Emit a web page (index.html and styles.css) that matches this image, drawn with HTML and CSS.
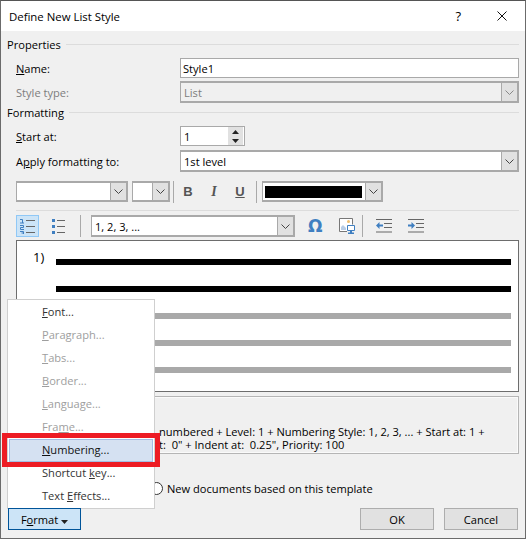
FILE: index.html
```html
<!DOCTYPE html>
<html lang="en">

<head>
    <meta charset="UTF-8" />
    <title>Define New List Style</title>
    <link rel="stylesheet" href="styles.css">
</head>

<body>
    <div class="dialog">
        <div class="titlebar">
            <span class="title">Define New List Style</span>
            <span class="help">?</span>
            <svg class="close" width="10" height="10" viewBox="0 0 10 10"><path d="M.5.5l9 9M9.500.5l-9 9" stroke="#111" fill="none" /></svg>
        </div>

        <div class="content">
            <div class="section"><span>Properties</span><i></i></div>
            <div class="row row-name">
                <label><u>N</u>ame:</label>
                <div class="field">Style1</div>
            </div>
            <div class="row row-type">
                <label class="disabled">Style type:</label>
                <div class="field combo disabled-field">
                    <span>List</span>
                    <b class="drop"><svg width="9" height="5" viewBox="0 0 9 5"><path d="M.5.5l4 4 4-4" fill="none" stroke="#888" /></svg></b>
                </div>
            </div>

            <div class="section section-format"><span>Formatting</span><i></i></div>
            <div class="row row-start">
                <label><u>S</u>tart at:</label>
                <div class="field spin">
                    <span>1</span>
                    <b class="spin-btns">
                        <svg width="7" height="4" viewBox="0 0 7 4"><path d="M3.500 0l3.500 4H0z" fill="#222" /></svg>
                        <svg width="7" height="4" viewBox="0 0 7 4"><path d="M3.500 4L7 0H0z" fill="#222" /></svg>
                    </b>
                </div>
            </div>
            <div class="row row-apply">
                <label>A<u>p</u>ply formatting to:</label>
                <div class="field combo">
                    <span>1st level</span>
                    <b class="drop"><svg width="9" height="5" viewBox="0 0 9 5"><path d="M.5.5l4 4 4-4" fill="none" stroke="#444" /></svg></b>
                </div>
            </div>

            <div class="font-bar">
                <div class="field combo font-name"><b class="drop"><svg width="9" height="5" viewBox="0 0 9 5"><path d="M.5.5l4 4 4-4" fill="none" stroke="#444" /></svg></b></div>
                <div class="field combo font-size"><b class="drop"><svg width="9" height="5" viewBox="0 0 9 5"><path d="M.5.5l4 4 4-4" fill="none" stroke="#444" /></svg></b></div>
                <i class="vsep"></i>
                <span class="fmt fmt-b">B</span>
                <span class="fmt fmt-i">I</span>
                <span class="fmt fmt-u">U</span>
                <i class="vsep"></i>
                <div class="field combo font-color">
                    <em class="swatch"></em>
                    <b class="drop"><svg width="9" height="5" viewBox="0 0 9 5"><path d="M.5.5l4 4 4-4" fill="none" stroke="#444" /></svg></b>
                </div>
            </div>

            <div class="hline"></div>

            <div class="list-bar">
                <span class="tool tool-on">
                    <svg width="15" height="15" viewBox="0 0 15 15">
                        <path d="M0 .5h2.500V4M0 4h4M0 6.500h3.500V8.500H.5v2h3.500M0 12.500h3.500v3H0M1.500 14h2" fill="none" stroke="#3f7fc1" />
                        <path d="M6 1.500h9M6 7.500h9M6 13.500h9" stroke="#666" stroke-width="1.200" />
                    </svg>
                </span>
                <span class="tool">
                    <svg width="13" height="15" viewBox="0 0 13 15">
                        <path d="M0 0h3v3H0zM0 6h3v3H0zM0 12h3v3H0z" fill="#3f7fc1" />
                        <path d="M5 1.500h8M5 7.500h8M5 13.500h8" stroke="#666" stroke-width="1.200" />
                    </svg>
                </span>
                <i class="vsep"></i>
                <div class="field combo num-style">
                    <span>1, 2, 3, ...</span>
                    <b class="drop"><svg width="9" height="5" viewBox="0 0 9 5"><path d="M.5.5l4 4 4-4" fill="none" stroke="#444" /></svg></b>
                </div>
                <span class="omega">Ω</span>
                <svg class="pic" width="16" height="16" viewBox="0 0 16 16">
                    <path d="M8 13.500H.5V.5h13v6" fill="#fff" stroke="#777" />
                    <path d="M2 12V9l2-2 3 3v2z" fill="#b8cde6" />
                    <circle cx="9.500" cy="3.500" r="1.500" fill="#f0c070" />
                    <path d="M8.500 7.500h7v5h-7z" fill="#fff" stroke="#3f7fc1" />
                    <path d="M11 13h2v1.500h2V16H9v-1.500h2z" fill="#3f7fc1" />
                </svg>
                <i class="vsep"></i>
                <svg class="indent" width="16" height="14" viewBox="0 0 16 14">
                    <path d="M0 .5h16M8 4.500h8M8 8.500h8M0 13h16" stroke="#666" />
                    <path d="M0 6.500l3.500-3.500v2.500H7v2H3.500V10z" fill="#3f7fc1" />
                </svg>
                <svg class="indent" width="16" height="14" viewBox="0 0 16 14">
                    <path d="M0 .5h16M8 4.500h8M8 8.500h8M0 13h16" stroke="#666" />
                    <path d="M7 6.500L3.500 3v2.500H0v2h3.500V10z" fill="#3f7fc1" />
                </svg>
            </div>

            <div class="preview">
                <span class="marker">1)</span>
                <div class="line dark"></div>
                <div class="line dark"></div>
                <div class="line grey"></div>
                <div class="line grey"></div>
                <div class="line grey"></div>
            </div>

            <div class="desc">
                <p>numbered + Level: 1 + Numbering Style: 1, 2, 3, ... + Start at: 1 +<br>t:&nbsp; 0" + Indent at:&nbsp; 0.25", Priority: 100</p>
            </div>

            <div class="scope">
                <span class="radio"></span>
                <span>New documents based on this template</span>
            </div>

            <div class="actions">
                <button class="btn format-btn">F<u>o</u>rmat <svg width="7" height="4" viewBox="0 0 7 4"><path d="M0 0h7L3.500 4z" fill="#222" /></svg></button>
                <span class="spacer"></span>
                <button class="btn">OK</button>
                <button class="btn">Cancel</button>
            </div>
        </div>

        <!-- Format popup -->
        <ul class="menu">
            <li><u>F</u>ont...</li>
            <li class="off"><u>P</u>aragraph...</li>
            <li class="off"><u>T</u>abs...</li>
            <li class="off"><u>B</u>order...</li>
            <li class="off"><u>L</u>anguage...</li>
            <li class="off">Fra<u>m</u>e...</li>
            <li class="active"><u>N</u>umbering...</li>
            <li>Shortcut <u>k</u>ey...</li>
            <li>Text <u>E</u>ffects...</li>
        </ul>
        <div class="callout"></div>
    </div>
</body>

</html>
```

FILE: styles.css
```css
* {
    box-sizing: border-box;
}

html,
body {
    margin: 0;
    height: 100%;
}

body {
    font-family: "Open Sans", "Noto Sans", sans-serif;
    font-size: 11.1px;
    color: #000;
    background: #fff;
}

.dialog {
    position: relative;
    width: 526px;
    height: 539px;
    border: 1px solid #6b6b6b;
    border-top-color: #555;
    background: #f0f0f0;
}

.titlebar {
    display: flex;
    align-items: center;
    height: 30px;
    padding: 0 18px 0 8px;
    background: #fff;
}

.title {
    flex: 1;
    font-size: 11.4px;
}

.help {
    font-size: 13px;
    margin-right: 36px;
}

.content {
    padding: 5px 6px 0;
}

.section {
    display: flex;
    align-items: center;
    gap: 5px;
    height: 16px;
}

.section i {
    flex: 1;
    height: 1px;
    background: #dcdcdc;
}

.section-format {
    margin-top: 1px;
}

.row {
    display: flex;
    align-items: center;
    padding-left: 9px;
}

.row label {
    width: 164px;
}

.row .field {
    flex: 1;
}

.row label.disabled {
    color: #7d7d7d;
}

.field {
    display: flex;
    align-items: center;
    height: 20px;
    padding-left: 3px;
    background: #fff;
    border: 1px solid #a9a9a9;
}

.field span {
    flex: 1;
}

.row-name {
    margin-top: 6px;
}

.row-name .field {
    padding-left: 2px;
}

.row-type {
    margin-top: 3px;
}

.row-type .field,
.row-apply .field {
    height: 22px;
}

.disabled-field {
    color: #7d7d7d;
    background: #f0f0f0;
}

.combo {
    border-width: 2px 2px 2px 1px;
}

.drop {
    display: flex;
    align-items: center;
    justify-content: center;
    flex: none;
    width: 16px;
    height: 100%;
    margin-left: auto;
    background: #e1e1e1;
    border-left: 1px solid #a9a9a9;
}

.row-start {
    margin-top: 6px;
}

.row-start .field.spin {
    flex: none;
    width: 65px;
    height: 20px;
}

.spin-btns {
    display: flex;
    flex-direction: column;
    align-items: center;
    justify-content: space-around;
    width: 15px;
    height: 18px;
    margin-right: 1px;
    background: #e1e1e1;
}

.row-apply {
    margin-top: 4px;
}

.font-bar {
    display: flex;
    align-items: center;
    height: 21px;
    margin-top: 9px;
    padding-left: 9px;
}

.font-name {
    width: 112px;
    height: 21px;
}

.font-size {
    width: 38px;
    height: 21px;
    margin-left: 4px;
}

.font-bar .vsep {
    margin-left: 3px;
}

.vsep {
    flex: none;
    width: 1px;
    height: 22px;
    background: #a9a9a9;
}

.fmt {
    width: 26px;
    text-align: center;
    font-family: "Liberation Sans", sans-serif;
    font-size: 13px;
    font-weight: 700;
    color: #555;
}

.fmt-b {
    margin-left: 1px;
}

.fmt-i {
    font-style: italic;
    font-family: "Liberation Serif", serif;
    font-size: 14px;
}

.fmt-u {
    text-decoration: underline;
}

.font-color {
    width: 121px;
    height: 21px;
    margin-left: 5px;
    padding-left: 2px;
}

.swatch {
    flex: none;
    width: 97px;
    height: 12px;
    background: #000;
}

.hline {
    height: 1px;
    margin: 8px 0 4px 9px;
    background: #dcdcdc;
}

.list-bar {
    display: flex;
    align-items: center;
    height: 22px;
    padding-left: 9px;
}

.tool {
    display: flex;
    align-items: center;
    justify-content: center;
    width: 23px;
    height: 22px;
}

.tool-on {
    background: #cce4f7;
    border: 1px solid #90c8f6;
}

.tool-on + .tool {
    margin-left: 8px;
}

.list-bar .vsep {
    margin-left: 10px;
}

.num-style {
    width: 204px;
    height: 22px;
    margin-left: 10px;
}

.omega {
    width: 14px;
    margin-left: 13px;
    font-size: 17px;
    line-height: 1;
    font-weight: 700;
    text-align: center;
    color: #3f7fc1;
    font-family: "DejaVu Sans", sans-serif;
}

.pic {
    margin-left: 17px;
}

.list-bar .pic + .vsep {
    margin-left: 7px;
}

.indent {
    margin-left: 13px;
}

.indent + .indent {
    margin-left: 16px;
}

.preview {
    position: relative;
    height: 152px;
    margin: 3px 0 0 9px;
    padding: 18px 7px 0 39px;
    background: #fff;
    border: 1px solid #6d6d6d;
}

.marker {
    position: absolute;
    left: 16px;
    top: 7px;
    font-size: 13px;
}

.line {
    height: 6px;
    margin-bottom: 21px;
}

.dark {
    background: #000;
}

.grey {
    background: #a9a9a9;
}

.desc {
    height: 58px;
    margin: 4px 0 0 9px;
    padding: 28px 0 0 142px;
    border: 1px solid #b5b5b5;
    box-shadow: inset 0 0 0 1px #fafafa;
}

.desc p {
    margin: 0;
    line-height: 13px;
    white-space: nowrap;
}

.scope {
    display: flex;
    align-items: center;
    gap: 4px;
    height: 16px;
    margin-top: 26px;
    padding-left: 143px;
}

.radio {
    width: 13px;
    height: 13px;
    border: 1px solid #333;
    border-radius: 50%;
    background: #fff;
}

.actions {
    display: flex;
    gap: 10px;
    margin-top: 12px;
    padding: 0 1px;
}

.spacer {
    flex: 1;
}

.btn {
    width: 74px;
    height: 22px;
    padding: 0;
    font: inherit;
    color: #000;
    background: #e1e1e1;
    border: 1px solid #adadad;
}

.format-btn {
    position: relative;
    z-index: 1;
    width: 73px;
    background: #cce4f7;
    border-color: #005499;
}

.menu {
    position: absolute;
    left: 6px;
    top: 298px;
    width: 148px;
    margin: 0;
    padding: 1px 1px 0;
    list-style: none;
    background: #fff;
    border: 1px solid #cfcfcf;
}

.menu li {
    height: 23px;
    padding: 3px 0 0 33px;
    line-height: 16px;
    color: #333;
}

.menu li.off {
    color: #9e9e9e;
}

.menu li.active {
    color: #111;
    background: #d5e1f2;
    border: 1px solid #a3bde3;
    padding: 2px 0 0 32px;
}

.callout {
    position: absolute;
    left: 1px;
    top: 432px;
    width: 158px;
    height: 34px;
    border: 5px solid #ed1c24;
}
```
